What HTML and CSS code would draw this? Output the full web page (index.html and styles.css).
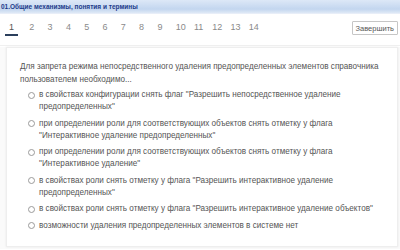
FILE: index.html
```html
<!DOCTYPE html>
<html lang="ru">
<head>
<meta charset="utf-8">
<link rel="stylesheet" href="styles.css">
</head>
<body>
<div class="header">01.Общие механизмы, понятия и термины</div>
<div class="nav">
  <div class="tabs">
    <span class="tab active">1</span>
    <span class="tab">2</span>
    <span class="tab">3</span>
    <span class="tab">4</span>
    <span class="tab">5</span>
    <span class="tab">6</span>
    <span class="tab">7</span>
    <span class="tab">8</span>
    <span class="tab">9</span>
    <span class="tab">10</span>
    <span class="tab">11</span>
    <span class="tab">12</span>
    <span class="tab">13</span>
    <span class="tab">14</span>
  </div>
  <button class="finish">Завершить</button>
</div>
<div class="main">
  <div class="card">
    <p class="question">Для запрета режима непосредственного удаления предопределенных элементов справочника пользователем необходимо...</p>
    <ul class="options">
      <li class="option"><span class="radio"></span><span class="label">в свойствах конфигурации снять флаг "Разрешить непосредственное удаление предопределенных"</span></li>
      <li class="option"><span class="radio"></span><span class="label">при определении роли для соответствующих объектов снять отметку у флага "Интерактивное удаление предопределенных"</span></li>
      <li class="option"><span class="radio"></span><span class="label">при определении роли для соответствующих объектов снять отметку у флага "Интерактивное удаление"</span></li>
      <li class="option"><span class="radio"></span><span class="label">в свойствах роли снять отметку у флага "Разрешить интерактивное удаление предопределенных"</span></li>
      <li class="option"><span class="radio"></span><span class="label">в свойствах роли снять отметку у флага "Разрешить интерактивное удаление объектов"</span></li>
      <li class="option"><span class="radio"></span><span class="label">возможности удаления предопределенных элементов в системе нет</span></li>
    </ul>
  </div>
</div>
</body>
</html>
```
FILE: styles.css
```css
* { box-sizing: border-box; }
body {
  margin: 0;
  font-family: "Liberation Sans", Arial, sans-serif;
  background: #ffffff;
  width: 400px;
  height: 250px;
  overflow: hidden;
}
.header {
  height: 14px;
  padding: 0 0 0 1px;
  background: linear-gradient(#dde8f7, #c3d6ef 70%, #dfe9f6);
  border-bottom: 1px solid #e8eef8;
  color: #1d3b8a;
  font-weight: bold;
  font-size: 6.5px;
  line-height: 13px;
  white-space: nowrap;
}
.nav {
  display: flex;
  align-items: flex-start;
  justify-content: space-between;
  height: 32px;
  padding: 6px 2px 0 0;
  border-bottom: 1px solid #f0f0f0;
  margin-bottom: 1px;
}
.tabs {
  display: flex;
  padding-left: 5px;
}
.tab {
  width: 18.3px;
  font-size: 9px;
  color: #8a8a8a;
  line-height: 14px;
  height: 16px;
  padding-left: 6px;
}
.tab.active {
  border-bottom: 2px solid #2b3f5c;
  width: 13px;
  margin-right: 5.3px;
  padding-left: 4px;
  color: #555;
}
.finish {
  margin-top: 1px;
  height: 14px;
  padding: 0 3px;
  font-family: "Liberation Sans", Arial, sans-serif;
  font-size: 7.5px;
  color: #555;
  background: #fff;
  border: 1px solid #c6c6c6;
  border-radius: 1px;
}
.main {
  padding: 0 2px 0 6px;
  background: #fafafa;
  height: 202px;
}
.card {
  background: #fff;
  border: 1px solid #eeeeee;
  box-shadow: 0 0 2px rgba(0,0,0,0.08);
  padding: 12px 10px 10px 13px;
  height: 200px;
}
.question {
  margin: 0 0 3px 0;
  font-size: 8.15px;
  line-height: 13px;
  color: #555;
}
.options {
  list-style: none;
  margin: 0;
  padding: 0 0 0 8px;
}
.option {
  display: flex;
  align-items: flex-start;
  margin-bottom: 4.5px;
  font-size: 8.15px;
  line-height: 12px;
  color: #555;
}
.radio {
  flex: none;
  width: 7px;
  height: 7px;
  margin-top: 2.5px;
  margin-right: 4px;
  border: 1px solid #9a9a9a;
  border-radius: 50%;
  background: #fff;
}
```
